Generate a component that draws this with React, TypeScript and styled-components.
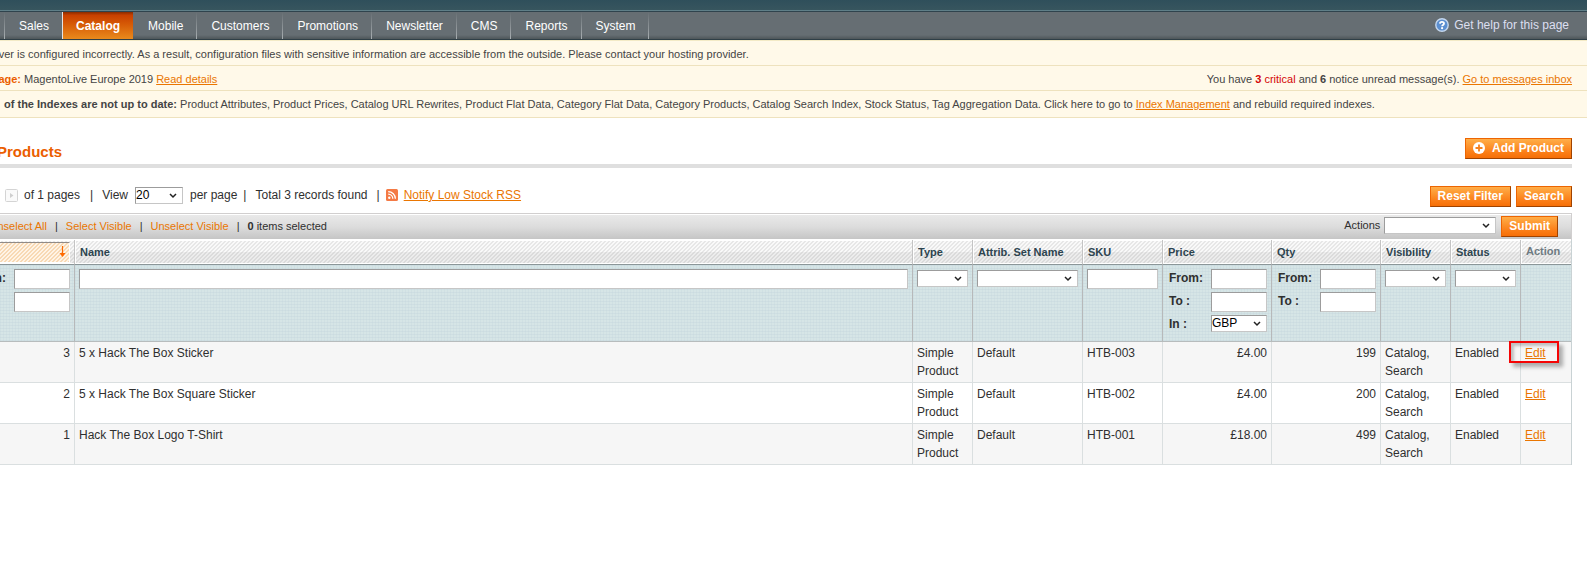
import React from 'react';
import styled, { createGlobalStyle, css } from 'styled-components';

const GlobalStyle = createGlobalStyle`
  * { box-sizing: border-box; }
  body {
    margin: 0;
    background: #fff;
    color: #2f2f2f;
    font: 12px/18px "Liberation Sans", Arial, Helvetica, sans-serif;
    overflow-x: hidden;
  }
  input, select, button { font: inherit; }
`;

const chevron =
  'url("data:image/svg+xml,%3Csvg xmlns=\'http://www.w3.org/2000/svg\' width=\'8\' height=\'6\'%3E%3Cpath d=\'M1 1l3 3 3-3\' fill=\'none\' stroke=\'%23222\' stroke-width=\'1.5\'/%3E%3C/svg%3E")';

const hatch = (a: string, b: string) =>
  `linear-gradient(135deg, ${a} 25%, ${b} 25%, ${b} 50%, ${a} 50%, ${a} 75%, ${b} 75%) 0 0 / 4px 4px`;

/* ---------- header ---------- */

const TopBand = styled.div`
  height: 11px;
  background: linear-gradient(#2f4f5b, #37555e);
  border-bottom: 1px solid #5f7f88;
`;

const NavBar = styled.nav`
  display: flex;
  justify-content: space-between;
  height: 29px;
  border-top: 1px solid #2f434d;
  border-bottom: 1px solid #2f3f47;
  background: linear-gradient(#666e73 85%, #4e5659);
`;

const NavList = styled.ul`
  display: flex;
  margin: 0;
  padding: 0 0 0 4px;
  list-style: none;
`;

const NavItem = styled.li<{ $active?: boolean }>`
  border-left: ${(p) => (p.$active ? '1px solid #e4e4e4' : '0')};
  background: ${(p) =>
    p.$active
      ? 'linear-gradient(#8a2c00, #c94000 12%, #d65a06 45%, #e98a1c)'
      : 'linear-gradient(rgba(190,196,200,0), #a9afb2) left / 1px 100% no-repeat'};

  ${(p) => !p.$active && css`&:nth-child(3) { background: none; }`}
  &:last-child { background:
    linear-gradient(rgba(190,196,200,0), #a9afb2) left / 1px 100% no-repeat,
    linear-gradient(rgba(190,196,200,0), #a9afb2) right / 1px 100% no-repeat; }
`;

const NavLink = styled.a<{ $active?: boolean }>`
  display: block;
  height: 27px;
  padding: 5px 13px 0 ${(p) => (p.$active ? 13 : 15)}px;
  color: #fff;
  font-weight: ${(p) => (p.$active ? 700 : 400)};
  text-decoration: none;
`;

const HelpLink = styled.a`
  display: flex;
  align-items: center;
  gap: 5px;
  height: 25px;
  padding-right: 18px;
  color: #dcdff0;
  text-decoration: none;
`;

/* ---------- notices ---------- */

const Notices = styled.div`
  border-top: 1px solid #f3eac6;
  color: #444;
  font-size: 11px;
`;

const Notice = styled.div`
  display: flex;
  justify-content: space-between;
  padding: 4px 15px 2px 0;
  border-bottom: 1px solid #eee2be;
  background: #fff9e9;
  &:last-child { padding-bottom: 4px; }
`;

const LeadIn = styled.span<{ $width: number }>`
  display: inline-flex;
  justify-content: flex-end;
  width: ${(p) => p.$width}px;
  vertical-align: top;
  white-space: nowrap;
`;

const Link = styled.a<{ $plain?: boolean }>`
  color: #ea7601;
  text-decoration: ${(p) => (p.$plain ? 'none' : 'underline')};
`;

const Accent = styled.strong`
  color: #eb5e00;
`;

const Critical = styled.span`
  color: #d40707;
`;

/* ---------- page content ---------- */

const Main = styled.main`
  padding: 20px 15px 0 0;
`;

const TitleRow = styled.header`
  display: flex;
  justify-content: space-between;
  height: 30px;
  border-bottom: 4px solid #dfdfdf;
`;

const Title = styled.h1`
  margin: 0;
  padding-top: 4px;
  color: #eb5e00;
  font-size: 15px;
  line-height: 20px;
`;

const Button = styled.button`
  display: flex;
  align-items: center;
  gap: 7px;
  height: 21px;
  padding: 0 7px 1px;
  border: 1px solid;
  border-color: #ed6502 #a04300 #a04300 #ed6502;
  background: linear-gradient(#ffae48, #fb7e17 70%, #f66f07);
  color: #fff;
  font-weight: 700;
  line-height: 18px;
  white-space: nowrap;
`;

const Select = styled.select<{ $width?: number }>`
  display: block;
  width: ${(p) => (p.$width ? `${p.$width}px` : '100%')};
  height: 17px;
  padding: 0;
  border: 1px solid;
  border-color: #9c9c9c #c6c6c6 #c6c6c6 #9c9c9c;
  border-radius: 0;
  appearance: none;
  background: #fff ${chevron} right 5px center no-repeat;
  color: #000;
  line-height: 15px;
`;

const TextInput = styled.input`
  display: block;
  width: 100%;
  height: 20px;
  padding: 0 2px;
  border: 1px solid;
  border-color: #9c9c9c #c6c6c6 #c6c6c6 #9c9c9c;
`;

const Pager = styled.div`
  display: flex;
  justify-content: space-between;
  margin: 18px 0 6px;
`;

const PagerInfo = styled.div`
  display: flex;
  align-items: flex-start;
  padding-left: 5px;
  white-space: nowrap;
  svg { margin-top: 3px; }
`;

const PagerText = styled.span<{ $gap?: number }>`
  margin-left: ${(p) => p.$gap ?? 6}px;
`;

const PagerLabel = styled.label`
  display: flex;
  gap: 7px;
  margin-left: 9px;
  select { margin-top: 1px; }
`;

const ButtonGroup = styled.div`
  display: flex;
  gap: 5px;
`;

const MassBar = styled.div`
  display: flex;
  justify-content: space-between;
  height: 27px;
  padding: 2px 13px 0 0;
  border: 1px solid #d1cfcf;
  border-width: 1px 1px 0 0;
  background: linear-gradient(#e9e9e9, #dcdcdc 50%, #c5c5c5) 0 1px / 100% 24px no-repeat #fff;
  font-size: 11px;
`;

const MassLinks = styled.div`
  display: flex;
  gap: 8px;
  padding-top: 1px;
`;

const MassActions = styled.div`
  display: flex;
  gap: 5px;
  font-size: 12px;
  label { display: flex; gap: 4px; font-size: 11px; }
  select { margin-top: 1px; }
`;

/* ---------- grid ---------- */

const Grid = styled.table`
  width: 100%;
  table-layout: fixed;
  border-collapse: separate;
  border-spacing: 0;
  border-right: 1px solid #c9d2d4;
`;

const HeadCell = styled.th<{ $muted?: boolean; $sorted?: boolean }>`
  height: 25px;
  padding: ${(p) => (p.$sorted ? '2px 4px 1px 0' : p.$muted ? '0 4px 2px 5px' : '0 4px 0 5px')};
  border-right: 1px solid #c4c4c4;
  border-bottom: 1px solid #8b9698;
  background:
    linear-gradient(#fff, #fff) 0 0 / 1px 100% no-repeat,
    linear-gradient(#fff, #fff) 0 100% / 100% 1px no-repeat,
    linear-gradient(#fff, #fff) 0 0 / 100% 1px no-repeat,
    linear-gradient(transparent 50%, rgba(0, 0, 0, 0.05) 50%),
    ${hatch('#f9f9f9', '#e7e7e7')};
  color: ${(p) => (p.$muted ? '#6e7b82' : '#2d444f')};
  font-size: 11px;
  line-height: 18px;
  text-align: left;
  white-space: nowrap;
  &:last-child { border-right: 0; }
`;

const SortedBox = styled.div`
  display: flex;
  justify-content: flex-end;
  height: 21px;
  padding: 3px 3px 0 0;
  border: 1px solid #fff;
  border-top-color: #918b87;
  border-left: 0;
  background: ${hatch('#fff4e6', '#f8d9b4')};
`;

const FilterCell = styled.td`
  height: 77px;
  padding: 4px 4px 0;
  border-right: 1px solid #b7b9ba;
  border-bottom: 1px solid #b7bcbd;
  background:
    linear-gradient(rgba(196, 214, 220, 0.4) 1px, transparent 1px) 0 0 / 3px 3px,
    linear-gradient(90deg, rgba(196, 214, 220, 0.3) 1px, transparent 1px) 0 0 / 3px 3px,
    #d6e5e6;
  vertical-align: top;
  > select { margin-top: 1px; }
  &:last-child { border-right: 0; }
`;

const RangeStack = styled.div`
  display: grid;
  grid-template-columns: minmax(0, 1fr);
  gap: 3px;
`;

const RangeRow = styled.label`
  display: flex;
  justify-content: space-between;
  height: 20px;
  padding-left: 2px;
  font-weight: 700;
  select, input { flex: none; width: 56px; font-weight: 400; }
`;

const LeadRow = styled(RangeRow)`
  justify-content: flex-end;
  gap: 8px;
  padding-left: 0;
`;

const Cell = styled.td<{ $right?: boolean }>`
  position: relative;
  height: 41px;
  padding: 2px 4px;
  border-right: 1px solid #dadfe0;
  border-bottom: 1px solid #dadfe0;
  text-align: ${(p) => (p.$right ? 'right' : 'left')};
  vertical-align: top;
  &:last-child { border-right: 0; }
  tr:nth-child(odd) > & { background: #f6f6f6; }
`;

const Highlight = styled.span`
  position: absolute;
  z-index: 1;
  top: -1px;
  left: -12px;
  width: 50px;
  height: 22px;
  border: 2px solid #f50505;
  box-shadow: 4px 4px 4px rgba(0, 0, 0, 0.3), inset 3px 3px 3px rgba(0, 0, 0, 0.22);
  pointer-events: none;
`;

const HelpIcon = () => (
  <svg width="14" height="14" viewBox="0 0 14 14" aria-hidden="true">
    <circle cx="7" cy="7" r="6.2" fill="#5b8fd0" stroke="#c4d7ee" strokeWidth="1.4" />
    <path d="M4.9 5.6C5 3.3 9 3.3 9 5.5 9 7 7.1 6.9 7.1 8.3" fill="none" stroke="#fff" strokeWidth="1.8" />
    <circle cx="7.1" cy="10.2" r="1.1" fill="#fff" />
  </svg>
);

const PlusIcon = () => (
  <svg width="12" height="12" viewBox="0 0 12 12" aria-hidden="true">
    <circle cx="6" cy="6" r="6" fill="#fff" />
    <path d="M6 2.5v7M2.5 6h7" stroke="#f58220" strokeWidth="1.8" />
  </svg>
);

const NextIcon = () => (
  <svg width="13" height="13" viewBox="0 0 13 13" aria-hidden="true">
    <rect x="0.5" y="0.5" width="12" height="12" rx="1" fill="#fafafa" stroke="#d4d4d4" />
    <path d="M5 4l3.5 2.5L5 9z" fill="#cfcfcf" />
  </svg>
);

const RssIcon = () => (
  <svg width="12" height="12" viewBox="0 0 12 12" aria-hidden="true">
    <rect width="12" height="12" rx="1.5" fill="#f47a45" />
    <circle cx="3.3" cy="8.8" r="1.2" fill="#fff" />
    <path d="M2.2 5.2a4.6 4.6 0 0 1 4.6 4.6M2.2 2.6a7.2 7.2 0 0 1 7.2 7.2" fill="none" stroke="#fff" strokeWidth="1.3" />
  </svg>
);

const SortIcon = () => (
  <svg width="7" height="12" viewBox="0 0 7 12" aria-hidden="true">
    <path d="M3.5 0v10" stroke="#ff6a00" strokeWidth="1.2" />
    <path d="M0.5 7h6l-3 4z" fill="#ff6a00" />
  </svg>
);

const menu = ['Sales', 'Catalog', 'Mobile', 'Customers', 'Promotions', 'Newsletter', 'CMS', 'Reports', 'System'];

const columnWidths = [75, undefined, 60, 110, 80, 109, 109, 70, 70, 50];

const headings = ['Name', 'Type', 'Attrib. Set Name', 'SKU', 'Price', 'Qty', 'Visibility', 'Status'];

const products = [
  { id: 3, name: '5 x Hack The Box Sticker', sku: 'HTB-003', price: '£4.00', qty: 199, marked: true },
  { id: 2, name: '5 x Hack The Box Square Sticker', sku: 'HTB-002', price: '£4.00', qty: 200, marked: false },
  { id: 1, name: 'Hack The Box Logo T-Shirt', sku: 'HTB-001', price: '£18.00', qty: 499, marked: false },
];

export default function App() {
  return (
    <>
      <GlobalStyle />
      <TopBand />
      <NavBar>
        <NavList>
          {menu.map((name) => (
            <NavItem key={name} $active={name === 'Catalog'}>
              <NavLink href="#" $active={name === 'Catalog'}>{name}</NavLink>
            </NavItem>
          ))}
        </NavList>
        <HelpLink href="#"><HelpIcon />Get help for this page</HelpLink>
      </NavBar>

      <Notices>
        <Notice>
          <div>
            <LeadIn $width={14}>ver</LeadIn> is configured incorrectly. As a result, configuration files with sensitive
            information are accessible from the outside. Please contact your hosting provider.
          </div>
        </Notice>
        <Notice>
          <div>
            <LeadIn $width={21}><Accent>age:</Accent></LeadIn> MagentoLive Europe 2019 <Link href="#">Read details</Link>
          </div>
          <div>
            You have <Critical><b>3</b> critical</Critical> and <b>6</b> notice unread message(s).{' '}
            <Link href="#">Go to messages inbox</Link>
          </div>
        </Notice>
        <Notice>
          <div>
            <LeadIn $width={177}><b>of the Indexes are not up to date:</b></LeadIn> Product Attributes, Product Prices,
            Catalog URL Rewrites, Product Flat Data, Category Flat Data, Category Products, Catalog Search Index, Stock
            Status, Tag Aggregation Data. Click here to go to <Link href="#">Index Management</Link> and rebuild required
            indexes.
          </div>
        </Notice>
      </Notices>

      <Main>
        <TitleRow>
          <Title><LeadIn $width={62}>Products</LeadIn></Title>
          <Button type="button"><PlusIcon />Add Product</Button>
        </TitleRow>

        <Pager>
          <PagerInfo>
            <NextIcon />
            <PagerText>of 1 pages</PagerText>
            <PagerText $gap={10}>|</PagerText>
            <PagerLabel>
              View
              <Select $width={48} defaultValue="20"><option>20</option></Select>
            </PagerLabel>
            <PagerText $gap={7}>per page</PagerText>
            <PagerText>|</PagerText>
            <PagerText $gap={9}>Total 3 records found</PagerText>
            <PagerText $gap={9}>|</PagerText>
            <PagerText><RssIcon /></PagerText>
            <PagerText><Link href="#">Notify Low Stock RSS</Link></PagerText>
          </PagerInfo>
          <ButtonGroup>
            <Button type="button">Reset Filter</Button>
            <Button type="button">Search</Button>
          </ButtonGroup>
        </Pager>

        <MassBar>
          <MassLinks>
            <LeadIn $width={47}><Link $plain href="#">nselect All</Link></LeadIn>
            <span>|</span>
            <Link $plain href="#">Select Visible</Link>
            <span>|</span>
            <Link $plain href="#">Unselect Visible</Link>
            <span>|</span>
            <span><b>0</b> items selected</span>
          </MassLinks>
          <MassActions>
            <label>Actions<Select $width={112} /></label>
            <Button type="button">Submit</Button>
          </MassActions>
        </MassBar>

        <Grid>
          <colgroup>
            {columnWidths.map((width, i) => <col key={i} width={width} />)}
          </colgroup>
          <thead>
            <tr>
              <HeadCell $sorted aria-label="ID"><SortedBox><SortIcon /></SortedBox></HeadCell>
              {headings.map((h) => <HeadCell key={h}>{h}</HeadCell>)}
              <HeadCell $muted>Action</HeadCell>
            </tr>
            <tr>
              <FilterCell>
                <RangeStack>
                  <LeadRow>m:<TextInput /></LeadRow>
                  <LeadRow><TextInput aria-label="ID to" /></LeadRow>
                </RangeStack>
              </FilterCell>
              <FilterCell><TextInput aria-label="Name" /></FilterCell>
              <FilterCell><Select aria-label="Type" /></FilterCell>
              <FilterCell><Select aria-label="Attribute set" /></FilterCell>
              <FilterCell><TextInput aria-label="SKU" /></FilterCell>
              <FilterCell>
                <RangeStack>
                  <RangeRow>From:<TextInput /></RangeRow>
                  <RangeRow>To :<TextInput /></RangeRow>
                  <RangeRow>In :<Select defaultValue="GBP"><option>GBP</option></Select></RangeRow>
                </RangeStack>
              </FilterCell>
              <FilterCell>
                <RangeStack>
                  <RangeRow>From:<TextInput /></RangeRow>
                  <RangeRow>To :<TextInput /></RangeRow>
                </RangeStack>
              </FilterCell>
              <FilterCell><Select aria-label="Visibility" /></FilterCell>
              <FilterCell><Select aria-label="Status" /></FilterCell>
              <FilterCell />
            </tr>
          </thead>
          <tbody>
            {products.map((p) => (
              <tr key={p.id}>
                <Cell $right>{p.id}</Cell>
                <Cell>{p.name}</Cell>
                <Cell>Simple Product</Cell>
                <Cell>Default</Cell>
                <Cell>{p.sku}</Cell>
                <Cell $right>{p.price}</Cell>
                <Cell $right>{p.qty}</Cell>
                <Cell>Catalog, Search</Cell>
                <Cell>Enabled</Cell>
                <Cell>
                  <Link href="#">Edit</Link>
                  {p.marked && <Highlight />}
                </Cell>
              </tr>
            ))}
          </tbody>
        </Grid>
      </Main>
    </>
  );
}
